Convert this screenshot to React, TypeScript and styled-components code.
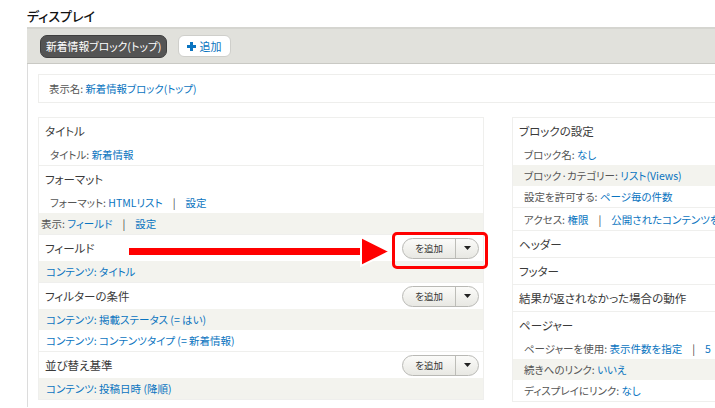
import styled, { createGlobalStyle } from 'styled-components';

const GlobalStyle = createGlobalStyle`
  html, body {
    margin: 0;
    padding: 0;
    background: #fff;
    overflow: hidden;
  }
  body {
    font-family: "Noto Sans CJK JP", "Noto Sans", sans-serif;
    font-feature-settings: "palt";
  }
`;

const Page = styled.div`
  position: relative;
  width: 715px;
  height: 408px;
  overflow: hidden;
  box-sizing: border-box;
  padding: 8px 0 0 27px;
`;

const Title = styled.h2`
  margin: 0;
  font-size: 13px;
  line-height: 16px;
  font-weight: 500;
  color: #111;
`;

const Panel = styled.div`
  margin-top: 3px;
  width: 960px;
  border-left: 1px solid #dcdcdc;
  min-height: 380px;
`;

const Toolbar = styled.div`
  display: flex;
  align-items: center;
  gap: 11px;
  height: 34px;
  padding-left: 13px;
  background: #e1e1dc;
  border-top: 2px solid #d5d5d0;
  border-bottom: 1px solid #c9c9c4;
  margin-left: -1px;
`;

const Tab = styled.div`
  display: flex;
  align-items: center;
  height: 21px;
  padding: 0 5px;
  background: #545454;
  border: 1px solid #3f3f3f;
  border-radius: 7px;
  color: #fff;
  font-size: 10.8px;
  white-space: nowrap;
`;

const AddButton = styled.div`
  display: flex;
  align-items: center;
  gap: 3px;
  height: 20px;
  padding: 0 9px 0 8px;
  background: #fff;
  border: 1px solid #cfcfcb;
  border-radius: 6px;
  color: #0a74c0;
  font-size: 11px;
`;

const Body = styled.div`
  padding: 10px 0 0 10px;
`;

const NameBox = styled.div`
  display: flex;
  align-items: center;
  height: 27px;
  padding-left: 10px;
  border: 1px solid #eeeeec;
  font-size: 10.4px;
  color: #555;
`;

const Columns = styled.div`
  display: flex;
  align-items: flex-start;
  gap: 28px;
  margin-top: 14px;
`;

const Column = styled.div<{ $width: number }>`
  width: ${p => p.$width}px;
  box-sizing: border-box;
  border: 1px solid #efefed;
  border-bottom: none;
`;

const Section = styled.div`
  border-bottom: 1px solid #efefed;
`;

const Heading = styled.div<{ $h?: number }>`
  display: flex;
  align-items: center;
  justify-content: space-between;
  height: ${p => p.$h ?? 26}px;
  padding: 0 4px 0 6px;
  font-size: 11.5px;
  color: #3a3a3a;
  white-space: nowrap;
`;

const Item = styled.div<{ $indent?: number; $shaded?: boolean; $h?: number }>`
  display: flex;
  align-items: center;
  height: ${p => p.$h ?? 21}px;
  padding-left: ${p => p.$indent ?? 11}px;
  background: ${p => (p.$shaded ? '#f3f3ee' : 'transparent')};
  font-size: 10.5px;
  color: #555;
  white-space: nowrap;
`;

const Link = styled.span`
  color: #0a74c0;
`;

const Pipe = styled.span`
  margin: 0 10px;
  color: #444;
`;

const Split = styled.div`
  display: flex;
  height: 19px;
  border: 1px solid #b9b9b5;
  border-radius: 11px;
  background: linear-gradient(#fbfbf9, #e8e8e3);
  overflow: hidden;
`;

const SplitMain = styled.div`
  display: flex;
  align-items: center;
  justify-content: center;
  width: 52px;
  font-size: 9.5px;
  color: #333;
  border-right: 1px solid #bdbdb8;
`;

const SplitCaret = styled.div`
  display: flex;
  align-items: center;
  justify-content: center;
  width: 22px;
`;

const Highlight = styled.div`
  position: absolute;
  left: 392px;
  top: 232px;
  width: 96px;
  height: 37px;
  box-sizing: border-box;
  border: 3px solid #ff0000;
  border-radius: 5px;
`;

const ArrowSvg = styled.svg`
  position: absolute;
  left: 127px;
  top: 234px;
`;

function AddSplit() {
  return (
    <Split>
      <SplitMain>を追加</SplitMain>
      <SplitCaret>
        <svg width="7" height="4" viewBox="0 0 7 4">
          <polygon points="0,0 7,0 3.5,4" fill="#222" />
        </svg>
      </SplitCaret>
    </Split>
  );
}

function Plus() {
  return (
    <svg width="9" height="9" viewBox="0 0 9 9">
      <rect x="3" y="0" width="3" height="9" fill="#0a74c0" />
      <rect x="0" y="3" width="9" height="3" fill="#0a74c0" />
    </svg>
  );
}

export default function App() {
  return (
    <>
      <GlobalStyle />
      <Page>
        <Title>ディスプレイ</Title>
        <Panel>
          <Toolbar>
            <Tab>新着情報ブロック(トップ)</Tab>
            <AddButton>
              <Plus />
              追加
            </AddButton>
          </Toolbar>
          <Body>
            <NameBox>
              表示名:&nbsp;<Link>新着情報ブロック(トップ)</Link>
            </NameBox>
            <Columns>
              <Column $width={446}>
                <Section>
                  <Heading>タイトル</Heading>
                  <Item>
                    タイトル:&nbsp;<Link>新着情報</Link>
                  </Item>
                </Section>
                <Section>
                  <Heading>フォーマット</Heading>
                  <Item>
                    フォーマット:&nbsp;<Link>HTMLリスト</Link>
                    <Pipe>|</Pipe>
                    <Link>設定</Link>
                  </Item>
                  <Item $shaded $indent={2}>
                    表示:&nbsp;<Link>フィールド</Link>
                    <Pipe>|</Pipe>
                    <Link>設定</Link>
                  </Item>
                </Section>
                <Section>
                  <Heading>
                    フィールド
                    <AddSplit />
                  </Heading>
                  <Item $shaded $indent={7}>
                    <Link>コンテンツ: タイトル</Link>
                  </Item>
                </Section>
                <Section>
                  <Heading>
                    フィルターの条件
                    <AddSplit />
                  </Heading>
                  <Item $shaded $indent={7}>
                    <Link>コンテンツ: 掲載ステータス (= はい)</Link>
                  </Item>
                  <Item $indent={7}>
                    <Link>コンテンツ: コンテンツタイプ (= 新着情報)</Link>
                  </Item>
                </Section>
                <Section>
                  <Heading>
                    並び替え基準
                    <AddSplit />
                  </Heading>
                  <Item $shaded $indent={7}>
                    <Link>コンテンツ: 投稿日時 (降順)</Link>
                  </Item>
                </Section>
              </Column>
              <Column $width={446}>
                <Section>
                  <Heading>ブロックの設定</Heading>
                  <Item>
                    ブロック名:&nbsp;<Link>なし</Link>
                  </Item>
                  <Item $shaded>
                    ブロック·カテゴリー:&nbsp;<Link>リスト(Views)</Link>
                  </Item>
                  <Item>
                    設定を許可する:&nbsp;<Link>ページ毎の件数</Link>
                  </Item>
                </Section>
                <Section>
                  <Item $h={22}>
                    アクセス:&nbsp;<Link>権限</Link>
                    <Pipe>|</Pipe>
                    <Link>公開されたコンテンツを</Link>
                  </Item>
                </Section>
                <Section>
                  <Heading>ヘッダー</Heading>
                </Section>
                <Section>
                  <Heading>フッター</Heading>
                </Section>
                <Section>
                  <Heading>結果が返されなかった場合の動作</Heading>
                </Section>
                <Section>
                  <Heading>ページャー</Heading>
                  <Item>
                    ページャーを使用:&nbsp;<Link>表示件数を指定</Link>
                    <Pipe>|</Pipe>
                    <Link>5</Link>
                  </Item>
                  <Item $shaded>
                    続きへのリンク:&nbsp;<Link>いいえ</Link>
                  </Item>
                  <Item>
                    ディスプレイにリンク:&nbsp;<Link>なし</Link>
                  </Item>
                </Section>
              </Column>
            </Columns>
          </Body>
        </Panel>
        <ArrowSvg width="266" height="36" viewBox="0 0 266 36">
          <rect x="2" y="14" width="236" height="7" fill="#ff0000" />
          <polygon
            points="234,3 263,17.5 234,32"
            fill="#ff0000"
            stroke="#fff"
            strokeWidth="2"
            strokeLinejoin="miter"
          />
        </ArrowSvg>
        <Highlight />
      </Page>
    </>
  );
}
